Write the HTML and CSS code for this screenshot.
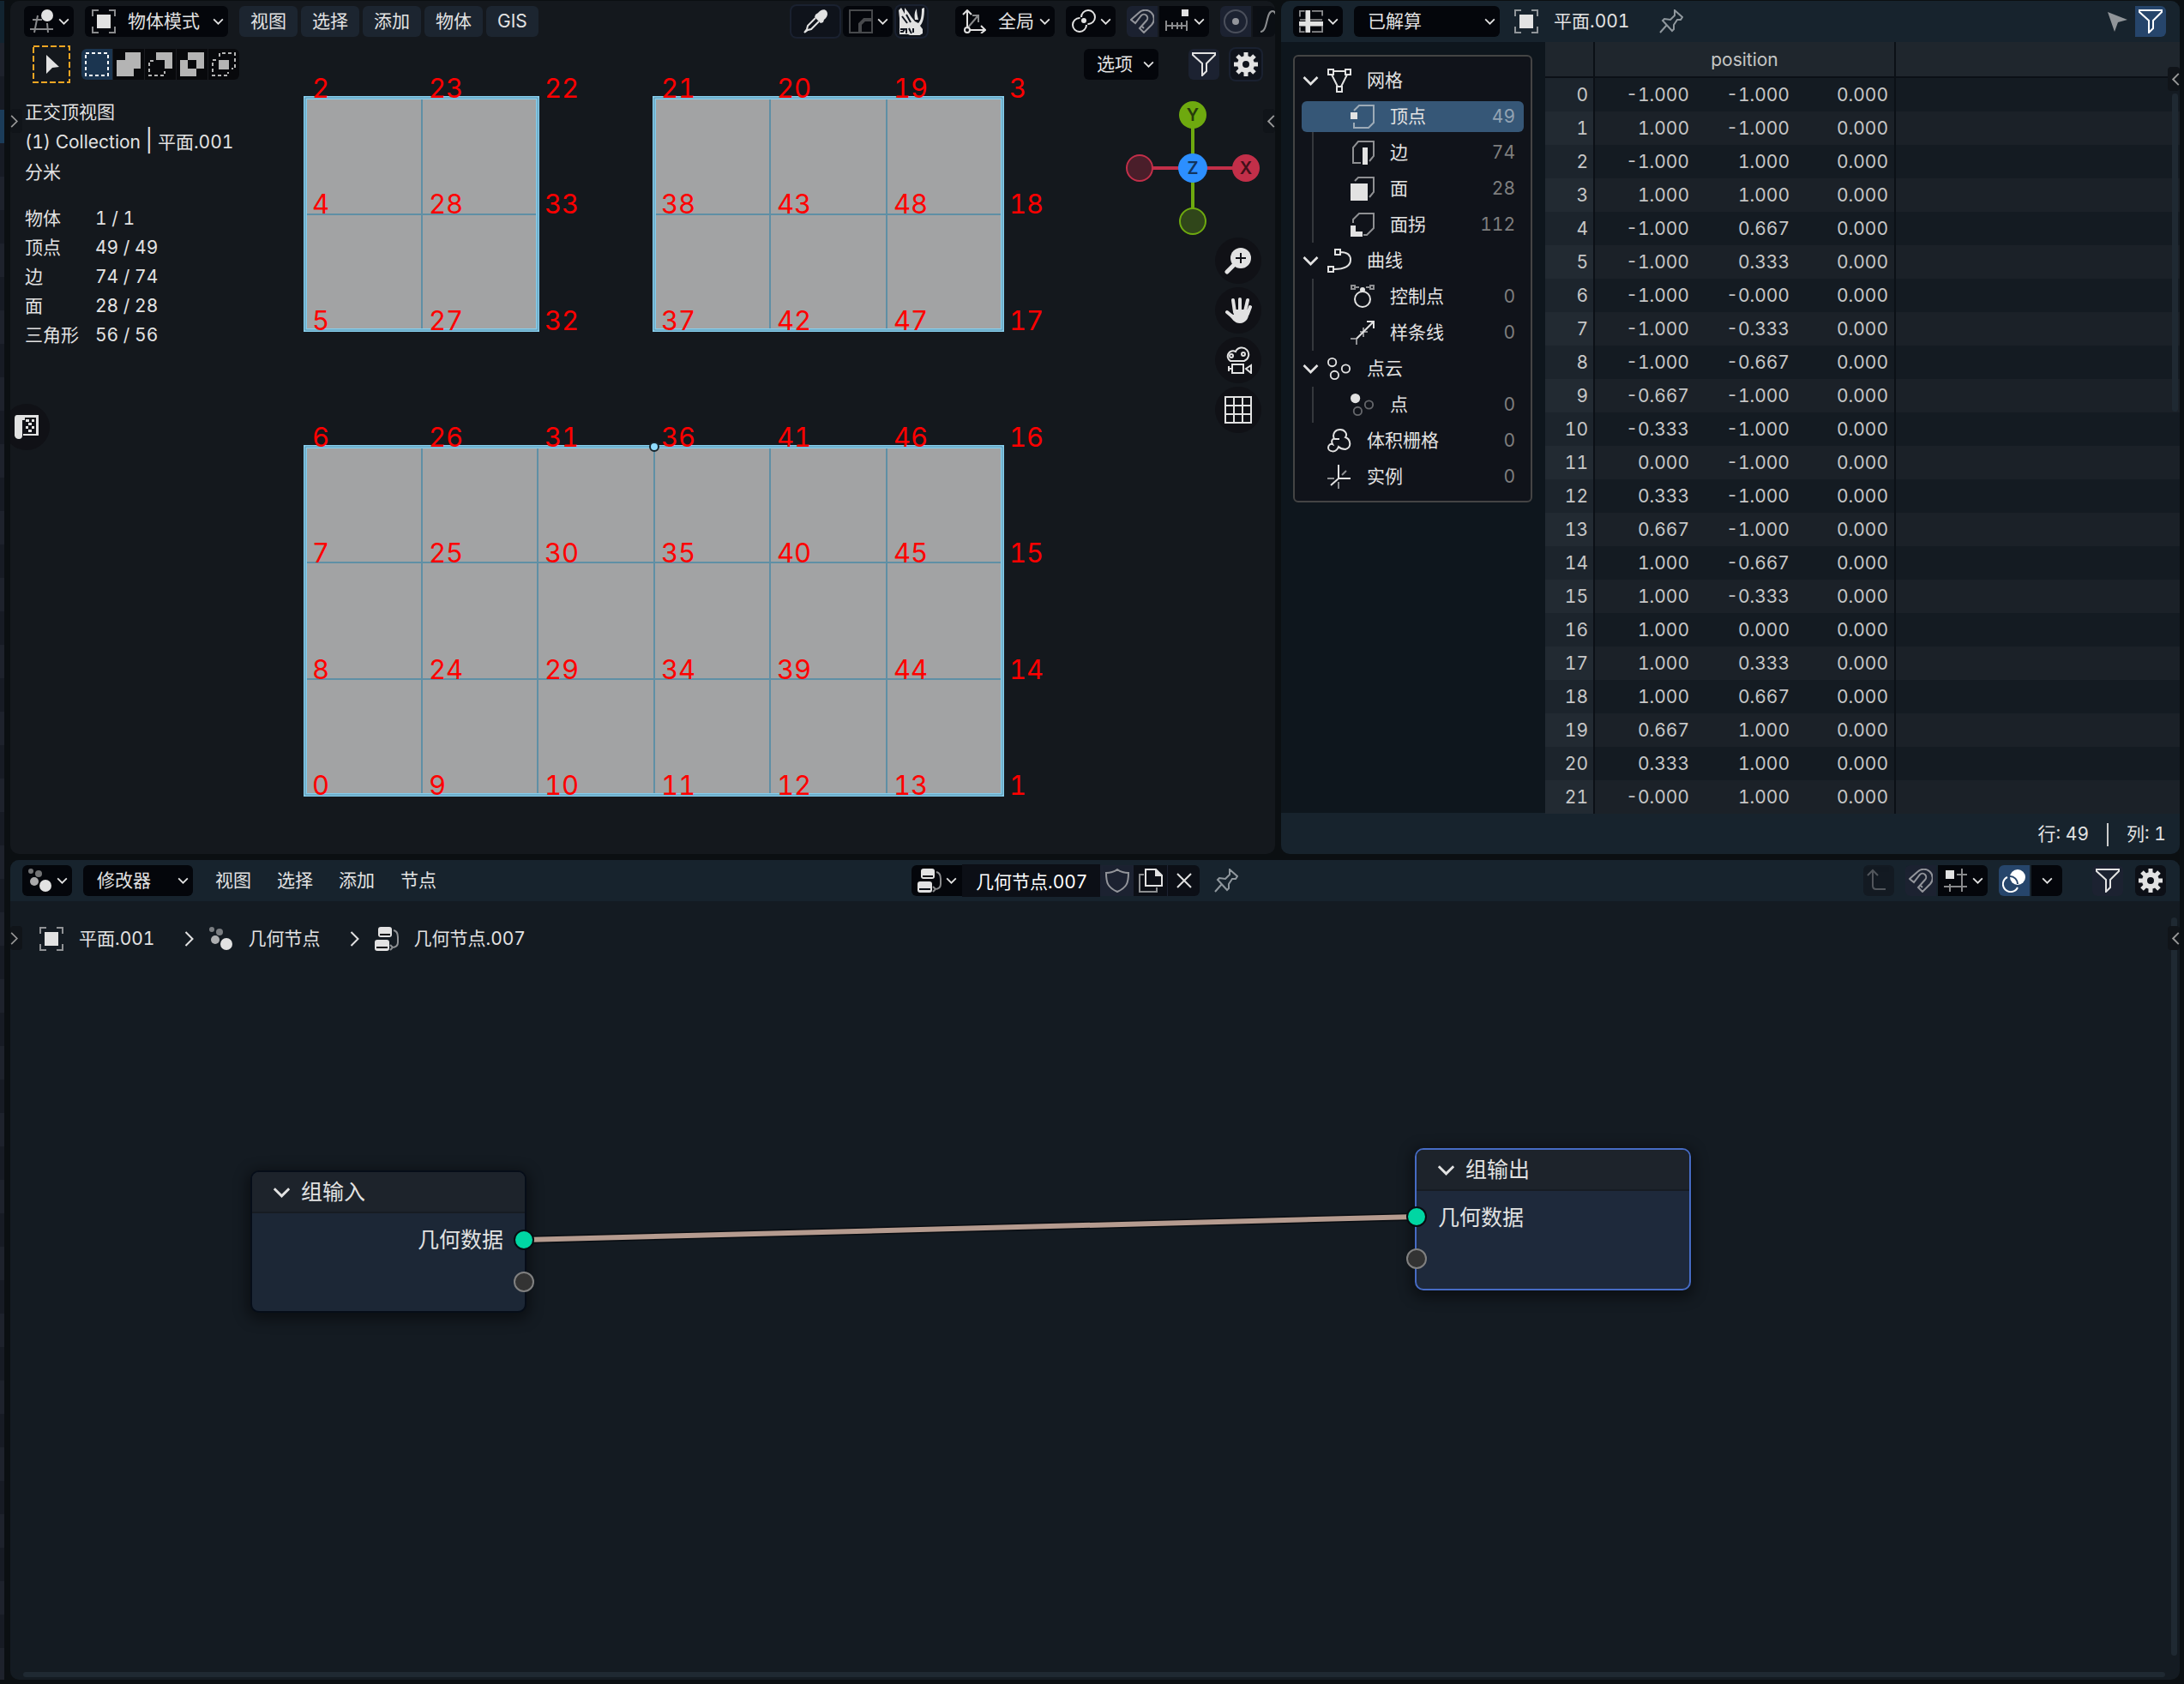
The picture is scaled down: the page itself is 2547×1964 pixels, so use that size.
FILE: index.html
```html
<!DOCTYPE html>
<html lang="zh-CN">
<head>
<meta charset="utf-8">
<title>几何节点</title>
<link rel="stylesheet" href="styles.css">
</head>
<body>
<svg class="sprite" aria-hidden="true">
  <symbol id="chev" viewBox="0 0 14 9"><path class="s" d="M1 1.500l6 6 6-6"/></symbol>
  <symbol id="right" viewBox="0 0 10 18"><path class="s" d="M1 1l8 8-8 8"/></symbol>
  <symbol id="left" viewBox="0 0 10 18"><path class="s" d="M9 2L2 9l7 7"/></symbol>
  <symbol id="object" viewBox="0 0 28 28"><path class="s dim" d="M1 8V1h7M20 1h7v7M27 20v7h-7M8 27H1v-7"/><path class="f" d="M6 6h16v16H6z"/></symbol>
  <symbol id="view3d" viewBox="0 0 28 28"><path class="s dim" d="M3 12h11M0 23h27M9 7L5 27M20 16l1 11"/><circle class="f" cx="20" cy="7" r="7"/></symbol>
  <symbol id="dropper" viewBox="0 0 28 28"><path class="f" d="M17 4c3-4 8-5 10-2s1 7-3 10l-1 3-3 1-7-7 1-3z"/><path class="s" d="M14 10L5 19l-1 4-3 4M18 14l-9 9-4 1-4 3"/></symbol>
  <symbol id="brush" viewBox="0 0 28 28"><path class="s" d="M1 1h26v26H1z"/><path d="M13 27V17l5-5h9" fill="none" stroke="currentColor" stroke-width="4"/></symbol>
  <symbol id="rhino" viewBox="0 0 30 32"><path class="f" d="M0 3l3-3 4 7V0l4 5 4 6 4 5 4 2c3-3 4-8 4-17l3-1c0 12-2 18-5 21l3 4v5l-5 3h-8l-4-2H1V12z"/><path class="f" d="M19 14c-1-6 0-10 2-13 0 5 1 9 2 13z"/><path d="M2 25h5l-2 3H2m7-4v6m3-6l3 6m2-6v5M4 10l6 8M9 8l5 9" fill="none" stroke="#10151f" stroke-width="2"/></symbol>
  <symbol id="axes" viewBox="0 0 28 28"><path class="s dim" d="M6 22L18 8M12 7h7v8"/><path class="s" d="M6 20V1M1 6l5-5 5 5M9 24h18M22 19l5 5-5 4"/><circle class="s" cx="6" cy="24" r="3"/></symbol>
  <symbol id="pivot" viewBox="0 0 28 28"><circle class="s" cx="9" cy="18" r="8" stroke-dasharray="38 12" transform="rotate(0 9 18)"/><circle class="s" cx="19" cy="9" r="8" stroke-dasharray="38 12" transform="rotate(180 19 9)"/><circle class="f" cx="14" cy="13" r="3"/></symbol>
  <symbol id="magnet" viewBox="0 0 28 28"><path class="s" d="M1 12l9-8a10 10 0 0 1 15 14l-9 9-5-5 8-9a4 4 0 0 0-6-6l-7 9zM16 22l-3-3" /></symbol>
  <symbol id="snapinc" viewBox="0 0 28 28"><path class="f" d="M19 0h8v8h-8z"/><path class="s dim" d="M0 19h26M1 13v12M8 15v8M14 15v8M19 15v8M25 13v12"/></symbol>
  <symbol id="snapgrid" viewBox="0 0 28 28"><path class="f" d="M2 2h10v10H2z"/><path class="s dim" d="M21 0v27M0 21h27M7 18v9M15 7h12"/></symbol>
  <symbol id="prop" viewBox="0 0 28 28"><circle class="s faint" cx="14" cy="14" r="13"/><circle class="f" cx="14" cy="14" r="4"/></symbol>
  <symbol id="falloff" viewBox="0 0 28 28"><path class="s" d="M1 26c9 0 6-24 14-24s5 24 12 24"/></symbol>
  <symbol id="filter" viewBox="0 0 28 28"><path class="s" d="M1 1h26v2L17 13v9l-5 5V13L1 3z"/></symbol>
  <symbol id="gear" viewBox="0 0 28 28"><circle cx="14" cy="14" r="7" fill="none" stroke="currentColor" stroke-width="6"/><path d="M14 5V0M14 23v5M5 14H0M23 14h5M8 8L4 4M20 20l4 4M8 20l-4 4M20 8l4-4" stroke="currentColor" stroke-width="5"/></symbol>
  <symbol id="sheet" viewBox="0 0 30 28"><path class="s dim" d="M1 8V1h6M16 1h13v6M29 20v7H16M7 27H1v-6M1 12h28"/><path class="f" d="M8 0h6v28H8zM0 14h30v6H0z"/></symbol>
  <symbol id="pin" viewBox="0 0 28 28"><path class="s" d="M18 1l9 8-2 3-4 0-4 6 0 5-2 2L4 13l2-2 7 1 5-5zM9 18l-8 9"/></symbol>
  <symbol id="cursor" viewBox="0 0 28 28"><path class="f" d="M2 3l23 9-11 3-4 11z"/></symbol>
  <symbol id="shield" viewBox="0 0 28 28"><path class="s" d="M14 1c4 3 8 4 13 4 0 12-2 17-13 22C3 22 1 17 1 5c5 0 9-1 13-4z"/></symbol>
  <symbol id="copy" viewBox="0 0 28 28"><path class="s dim" d="M6 7H1v20h20v-5"/><path class="s" d="M8 1h12l7 7v12H8z"/><path class="f" d="M19 0l9 9h-9z"/></symbol>
  <symbol id="close" viewBox="0 0 28 28"><path class="s" d="M6 6l16 16M22 6L6 22"/></symbol>
  <symbol id="up" viewBox="0 0 28 28"><path class="s" d="M1 8l6-6 6 6M7 2v18q0 4 4 4h11"/></symbol>
  <symbol id="overlay" viewBox="0 0 28 28"><circle class="f" cx="18" cy="10" r="9"/><path d="M9 9a9 9 0 0 1 9 9" fill="none" stroke="#26456b" stroke-width="2"/><path class="s" d="M6 10a9 9 0 1 0 12 12"/></symbol>
  <symbol id="tree" viewBox="0 0 28 28"><rect class="f" x="4" y="0" width="16" height="12" rx="3"/><rect class="f" x="0" y="15" width="17" height="13" rx="3"/><path d="M6 9h12M2 24h13" stroke="#0a0e14" stroke-width="2"/><path class="s dim" d="M22 4q5 1 5 8v6q0 6-7 6M18 21l3 3-3 3"/></symbol>
  <symbol id="geo" viewBox="0 0 28 28"><g class="f"><circle cx="3" cy="3" r="3" opacity=".5"/><circle cx="12" cy="6" r="4" opacity=".5"/><circle cx="7" cy="15" r="5" opacity=".75"/><circle cx="20" cy="20" r="7"/></g></symbol>
  <symbol id="mesh" viewBox="0 0 28 28"><path class="s" d="M1 1h6v6H1zM21 1h6v6h-6zM11 21h6v6h-6zM7 3h14M5 7l7 14M23 7l-7 14"/></symbol>
  <symbol id="vert" viewBox="0 0 28 28"><path class="s dim" d="M4 7l6-6h17v20l-6 6H4v-6"/><path class="f" d="M0 9h8v8H0z"/></symbol>
  <symbol id="edge" viewBox="0 0 28 28"><path class="s dim" d="M12 26H3V8l6-7h18v17l-5 6"/><path class="f" d="M14 8h6v20h-6z"/></symbol>
  <symbol id="face" viewBox="0 0 28 28"><path class="s dim" d="M5 5l4-4h18v17l-5 6"/><path class="f" d="M0 8h20v20H0z"/></symbol>
  <symbol id="corner" viewBox="0 0 28 28"><path class="s dim" d="M3 12V8l7-7h17v17l-8 8h-4"/><path class="f" d="M0 15h6v7h8v6H0z"/></symbol>
  <symbol id="curve" viewBox="0 0 28 28"><path class="s" d="M9 1h6v6H9zM1 21h6v6H1zM15 4c8 0 12 3 12 9 0 8-9 11-20 11"/></symbol>
  <symbol id="ctrl" viewBox="0 0 28 28"><circle class="s" cx="14" cy="17" r="9"/><path class="s dim" d="M1 1h4v4H1zM23 1h4v4h-4zM5 3h5M18 3h5"/><circle class="f" cx="14" cy="6" r="3"/></symbol>
  <symbol id="spline" viewBox="0 0 28 28"><path class="s" d="M7 21L27 1M19 1h8v8"/><path class="s dim" d="M0 21h7v7M11 13h4v6M15 8v5h5"/></symbol>
  <symbol id="cloud" viewBox="0 0 30 28"><circle class="s" cx="6" cy="6" r="5"/><circle class="s" cx="23" cy="14" r="5"/><circle class="s" cx="9" cy="22" r="5"/></symbol>
  <symbol id="point" viewBox="0 0 30 28"><circle class="f" cx="6" cy="6" r="6"/><g opacity=".4"><circle class="s" cx="23" cy="14" r="5"/><circle class="s" cx="9" cy="22" r="5"/></g></symbol>
  <symbol id="volume" viewBox="0 0 28 28"><path class="s" d="M8 12C5 5 10 1 15 1s9 5 6 9c6 2 8 12 0 14-4 0-6-1-8-3-3 8-12 6-12 1 0-3 3-5 5-4-2-4 0-7 3-6h5"/></symbol>
  <symbol id="inst" viewBox="0 0 28 28"><path class="s" d="M13 16V0M13 16h14M13 16l-9 8"/><path class="s dim" d="M0 16h8M13 20v8M17 12l5-5"/></symbol>
  <symbol id="zoom" viewBox="0 0 32 32"><circle class="f" cx="19" cy="13" r="12"/><path d="M11 21l-8 8" stroke="currentColor" stroke-width="5" stroke-linecap="round"/><path d="M19 7v12M13 13h12" stroke="#101116" stroke-width="2"/></symbol>
  <symbol id="hand" viewBox="0 0 32 32"><g fill="none" stroke="currentColor" stroke-width="4" stroke-linecap="round"><path d="M12 18L10 4M18 16V3M24 17l3-13M27 20l3-8M9 23l-6-5"/></g><path class="f" d="M10 15h18c2 9-3 16-10 16-6 0-10-5-13-11l6 1z"/></symbol>
  <symbol id="camera" viewBox="0 0 32 32"><path class="s" d="M7 17a6 6 0 1 1 6-11 8 8 0 1 1 10 11zM9 21h13v10H9zM5 23v6M5 26h4"/><circle class="s" cx="8" cy="11" r="2"/><circle class="s" cx="22" cy="9" r="2"/><path class="s" d="M31 22v9l-6-5z"/></symbol>
  <symbol id="grid" viewBox="0 0 32 32"><path class="s" d="M1 1h30v30H1zM11 1v30M21 1v30M1 11h30M1 21h30"/></symbol>
  <symbol id="asset" viewBox="0 0 28 28"><path class="f" fill-rule="evenodd" d="M3 0h25v24H10v-2h15V3H12v3H9v18q0 4-4 4t-5-4V4q0-4 3-4z"/><path class="f" d="M13 5h4v3h-4zM20 5h3v3h-3zM16 9h4v3h-4zM13 13h3v3h-3zM20 13h3v3h-3zM16 17h4v3h-4z"/></symbol>
  <symbol id="m1" viewBox="0 0 28 28"><path class="s" stroke-dasharray="4 3" d="M1 1h26v26H1z"/></symbol>
  <symbol id="m2" viewBox="0 0 28 28"><path class="f" d="M10 0h18v19h-8v9H0V9h10z"/></symbol>
  <symbol id="m3" viewBox="0 0 28 28"><path class="f" d="M9 0h19v19h-9V9H9z"/><path class="s" stroke-dasharray="4 3" d="M6 10H1v17h18v-5"/></symbol>
  <symbol id="m4" viewBox="0 0 28 28"><path class="f" fill-rule="evenodd" d="M9 0h19v19h-9v9H0V9h9zM9 9v10h10V9z"/></symbol>
  <symbol id="m5" viewBox="0 0 28 28"><path class="f" d="M8 9h12v11H8z"/><path class="s" stroke-dasharray="4 3" d="M9 5V1h18v18h-4M5 9H1v18h18v-4"/></symbol>
</svg>

<main class="app">
  <aside class="strip"></aside>

  <section class="panel viewport">
    <svg class="mesh" aria-hidden="true">
      <g class="faces"><path d="M344 113h271v271H344zM751 113h406v271H751zM344 520h813v406H344z"/></g>
      <path class="wires" d="M480 113v271M344 249h271M886 113v271M1022 113v271M751 249h406M480 520v406M615 520v406M751 520v406M886 520v406M1022 520v406M344 655h813M344 791h813"/>
      <g class="outline"><path d="M344 113h271v271H344zM751 113h406v271H751zM344 520h813v406H344z"/></g>
      <g class="inner"><path d="M344 113h271v271H344zM751 113h406v271H751zM344 520h813v406H344z"/></g>
      <g class="ids">
        <text x="352" y="113">2</text><text x="488" y="113">23</text><text x="623" y="113">22</text><text x="759" y="113">21</text><text x="894" y="113">20</text><text x="1030" y="113">19</text><text x="1165" y="113">3</text>
        <text x="352" y="248">4</text><text x="488" y="248">28</text><text x="623" y="248">33</text><text x="759" y="248">38</text><text x="894" y="248">43</text><text x="1030" y="248">48</text><text x="1165" y="248">18</text>
        <text x="352" y="384">5</text><text x="488" y="384">27</text><text x="623" y="384">32</text><text x="759" y="384">37</text><text x="894" y="384">42</text><text x="1030" y="384">47</text><text x="1165" y="384">17</text>
        <text x="352" y="520">6</text><text x="488" y="520">26</text><text x="623" y="520">31</text><text x="759" y="520">36</text><text x="894" y="520">41</text><text x="1030" y="520">46</text><text x="1165" y="520">16</text>
        <text x="352" y="655">7</text><text x="488" y="655">25</text><text x="623" y="655">30</text><text x="759" y="655">35</text><text x="894" y="655">40</text><text x="1030" y="655">45</text><text x="1165" y="655">15</text>
        <text x="352" y="791">8</text><text x="488" y="791">24</text><text x="623" y="791">29</text><text x="759" y="791">34</text><text x="894" y="791">39</text><text x="1030" y="791">44</text><text x="1165" y="791">14</text>
        <text x="352" y="926">0</text><text x="488" y="926">9</text><text x="623" y="926">10</text><text x="759" y="926">11</text><text x="894" y="926">12</text><text x="1030" y="926">13</text><text x="1165" y="926">1</text>
      </g>
      <circle class="origin" cx="751" cy="520" r="5"/>
    </svg>

    <header class="bar">
      <button class="btn black editor" aria-label="编辑器类型"><svg class="i"><use href="#view3d"/></svg><svg class="chev"><use href="#chev"/></svg></button>
      <label class="btn black dd mode"><svg class="i"><use href="#object"/></svg><select aria-label="模式"><option>物体模式</option></select><svg class="chev"><use href="#chev"/></svg></label>
      <nav class="menus filled"><button>视图</button><button>选择</button><button>添加</button><button>物体</button><button>GIS</button></nav>
      <div class="tools">
        <div class="cluster">
          <button class="btn ring wide" aria-label="吸管"><svg class="i"><use href="#dropper"/></svg></button>
          <button class="btn black editor" aria-label="笔刷"><svg class="i off"><use href="#brush"/></svg><svg class="chev"><use href="#chev"/></svg></button>
          <button class="btn ring sq" aria-label="Rhino"><svg class="rhino"><use href="#rhino"/></svg></button>
        </div>
        <label class="btn black dd orient"><svg class="i"><use href="#axes"/></svg><select aria-label="坐标系"><option>全局</option></select><svg class="chev"><use href="#chev"/></svg></label>
        <button class="btn black editor" aria-label="轴心点"><svg class="i"><use href="#pivot"/></svg><svg class="chev"><use href="#chev"/></svg></button>
        <div class="join"><button class="btn navy sq" aria-label="吸附"><svg class="i mid"><use href="#magnet"/></svg></button><button class="btn black editor" aria-label="吸附选项"><svg class="i"><use href="#snapinc"/></svg><svg class="chev"><use href="#chev"/></svg></button></div>
        <div class="join"><button class="btn navy sq" aria-label="衰减编辑"><svg class="i mid"><use href="#prop"/></svg></button><button class="btn clip" aria-label="衰减类型"><svg class="i mid"><use href="#falloff"/></svg></button></div>
      </div>
    </header>

    <div class="bar second">
      <button class="tool" aria-label="框选工具"><svg width="44" height="44" viewBox="0 0 44 44"><rect class="dash" x="1" y="1" width="42" height="42"/><path class="f" d="M16 11l15 14-8 1-7 7z"/></svg></button>
      <div class="modes"><button class="on" aria-label="设定"><svg class="i"><use href="#m1"/></svg></button><button aria-label="扩展"><svg class="i"><use href="#m2"/></svg></button><button aria-label="减去"><svg class="i"><use href="#m3"/></svg></button><button aria-label="差值"><svg class="i"><use href="#m4"/></svg></button><button aria-label="相交"><svg class="i"><use href="#m5"/></svg></button></div>
      <div class="right">
        <button class="btn black opts">选项<svg class="chev"><use href="#chev"/></svg></button>
        <button class="btn navy sq" aria-label="过滤"><svg class="i"><use href="#filter"/></svg></button>
        <button class="btn ring sq" aria-label="设置"><svg class="i"><use href="#gear"/></svg></button>
      </div>
    </div>

    <div class="info">
      <p>正交顶视图</p><p>(1) Collection <span class="rule">|</span> 平面.001</p><p>分米</p>
      <dl><dt>物体</dt><dd>1 / 1</dd><dt>顶点</dt><dd>49 / 49</dd><dt>边</dt><dd>74 / 74</dd><dt>面</dt><dd>28 / 28</dd><dt>三角形</dt><dd>56 / 56</dd></dl>
    </div>

    <button class="tab tl" aria-label="展开工具栏"><svg width="9" height="15"><use href="#right"/></svg></button>
    <button class="tab tr" aria-label="展开侧栏"><svg width="10" height="17"><use href="#left"/></svg></button>
    <button class="round assetbtn" aria-label="资产架"><svg class="i"><use href="#asset"/></svg></button>

    <div class="nav3d">
      <svg class="gizmo" width="160" height="160" viewBox="0 0 160 160">
        <path d="M18 80h124" stroke="#c22f49" stroke-width="4"/><path d="M80 18v124" stroke="#6ea90f" stroke-width="4"/>
        <circle cx="18" cy="80" r="15" fill="#4a1e2a" stroke="#c22f49" stroke-width="2"/><circle cx="142" cy="80" r="16" fill="#c22f49"/>
        <circle cx="80" cy="18" r="16" fill="#6ea90f"/><circle cx="80" cy="142" r="15" fill="#30461a" stroke="#6ea90f" stroke-width="2"/>
        <circle cx="80" cy="80" r="17" fill="#2c8fff"/>
        <text x="80" y="25" fill="#263a0c">Y</text><text x="80" y="87" fill="#12345c">Z</text><text x="142" y="87" fill="#42101a">X</text>
      </svg>
      <button class="round" aria-label="缩放"><svg class="n"><use href="#zoom"/></svg></button>
      <button class="round" aria-label="平移"><svg class="n"><use href="#hand"/></svg></button>
      <button class="round" aria-label="相机"><svg class="n"><use href="#camera"/></svg></button>
      <button class="round" aria-label="正交"><svg class="n"><use href="#grid"/></svg></button>
    </div>
  </section>

  <section class="panel sheet">
    <header class="bar head">
      <button class="btn black editor" aria-label="编辑器类型"><svg class="i"><use href="#sheet"/></svg><svg class="chev"><use href="#chev"/></svg></button>
      <label class="btn black dd state"><select aria-label="数据状态"><option>已解算</option></select><svg class="chev"><use href="#chev"/></svg></label>
      <span class="crumb first"><svg class="i"><use href="#object"/></svg>平面.001</span>
      <button class="bare pinbtn" aria-label="固定"><svg class="i"><use href="#pin"/></svg></button>
      <div class="join end"><button class="btn sq" aria-label="仅选中"><svg class="i mid"><use href="#cursor"/></svg></button><button class="btn blue sq" aria-label="过滤"><svg class="i"><use href="#filter"/></svg></button></div>
    </header>
    <div class="body">
      <div class="side">
        <ul class="domains">
          <li class="top"><svg class="tw"><use href="#chev"/></svg><svg class="i"><use href="#mesh"/></svg><span>网格</span></li>
          <li><ul>
            <li class="sel"><svg class="i"><use href="#vert"/></svg><span>顶点</span><b>49</b></li>
            <li><svg class="i"><use href="#edge"/></svg><span>边</span><b>74</b></li>
            <li><svg class="i"><use href="#face"/></svg><span>面</span><b>28</b></li>
            <li><svg class="i"><use href="#corner"/></svg><span>面拐</span><b>112</b></li>
          </ul></li>
          <li class="top"><svg class="tw"><use href="#chev"/></svg><svg class="i"><use href="#curve"/></svg><span>曲线</span></li>
          <li><ul>
            <li><svg class="i"><use href="#ctrl"/></svg><span>控制点</span><b>0</b></li>
            <li><svg class="i"><use href="#spline"/></svg><span>样条线</span><b>0</b></li>
          </ul></li>
          <li class="top"><svg class="tw"><use href="#chev"/></svg><svg class="i"><use href="#cloud"/></svg><span>点云</span></li>
          <li><ul><li><svg class="i"><use href="#point"/></svg><span>点</span><b>0</b></li></ul></li>
          <li class="top leaf"><svg class="i"><use href="#volume"/></svg><span>体积栅格</span><b>0</b></li>
          <li class="top leaf"><svg class="i"><use href="#inst"/></svg><span>实例</span><b>0</b></li>
        </ul>
      </div>
      <div class="data">
        <table>
          <colgroup><col class="c0"><col class="c1"><col class="c1"><col class="c1"><col></colgroup>
          <thead><tr><th></th><th colspan="3">position</th><th></th></tr></thead>
          <tbody>
            <tr><th>0</th><td>-1.000</td><td>-1.000</td><td>0.000</td><td></td></tr>
            <tr><th>1</th><td>1.000</td><td>-1.000</td><td>0.000</td><td></td></tr>
            <tr><th>2</th><td>-1.000</td><td>1.000</td><td>0.000</td><td></td></tr>
            <tr><th>3</th><td>1.000</td><td>1.000</td><td>0.000</td><td></td></tr>
            <tr><th>4</th><td>-1.000</td><td>0.667</td><td>0.000</td><td></td></tr>
            <tr><th>5</th><td>-1.000</td><td>0.333</td><td>0.000</td><td></td></tr>
            <tr><th>6</th><td>-1.000</td><td>-0.000</td><td>0.000</td><td></td></tr>
            <tr><th>7</th><td>-1.000</td><td>-0.333</td><td>0.000</td><td></td></tr>
            <tr><th>8</th><td>-1.000</td><td>-0.667</td><td>0.000</td><td></td></tr>
            <tr><th>9</th><td>-0.667</td><td>-1.000</td><td>0.000</td><td></td></tr>
            <tr><th>10</th><td>-0.333</td><td>-1.000</td><td>0.000</td><td></td></tr>
            <tr><th>11</th><td>0.000</td><td>-1.000</td><td>0.000</td><td></td></tr>
            <tr><th>12</th><td>0.333</td><td>-1.000</td><td>0.000</td><td></td></tr>
            <tr><th>13</th><td>0.667</td><td>-1.000</td><td>0.000</td><td></td></tr>
            <tr><th>14</th><td>1.000</td><td>-0.667</td><td>0.000</td><td></td></tr>
            <tr><th>15</th><td>1.000</td><td>-0.333</td><td>0.000</td><td></td></tr>
            <tr><th>16</th><td>1.000</td><td>0.000</td><td>0.000</td><td></td></tr>
            <tr><th>17</th><td>1.000</td><td>0.333</td><td>0.000</td><td></td></tr>
            <tr><th>18</th><td>1.000</td><td>0.667</td><td>0.000</td><td></td></tr>
            <tr><th>19</th><td>0.667</td><td>1.000</td><td>0.000</td><td></td></tr>
            <tr><th>20</th><td>0.333</td><td>1.000</td><td>0.000</td><td></td></tr>
            <tr><th>21</th><td>-0.000</td><td>1.000</td><td>0.000</td><td></td></tr>
          </tbody>
        </table>
        <i class="scroll"></i>
        <button class="tab" aria-label="展开侧栏"><svg width="10" height="17"><use href="#left"/></svg></button>
      </div>
    </div>
    <footer><span>行: 49</span><i></i><span>列: 1</span></footer>
  </section>

  <section class="panel nodes">
    <header class="bar head">
      <button class="btn black editor" aria-label="编辑器类型"><svg class="i"><use href="#geo"/></svg><svg class="chev"><use href="#chev"/></svg></button>
      <label class="btn black dd kind"><select aria-label="类型"><option>修改器</option></select><svg class="chev"><use href="#chev"/></svg></label>
      <nav class="menus"><button>视图</button><button>选择</button><button>添加</button><button>节点</button></nav>
      <div class="datablock">
        <button class="btn black" aria-label="浏览节点树"><svg class="i"><use href="#tree"/></svg><svg class="chev"><use href="#chev"/></svg></button>
        <input value="几何节点.007" aria-label="名称">
        <button class="shield" aria-label="伪用户"><svg class="i mid"><use href="#shield"/></svg></button>
        <button class="copy" aria-label="复制"><svg class="i"><use href="#copy"/></svg></button>
        <button class="unlink" aria-label="断开"><svg class="i"><use href="#close"/></svg></button>
        <button class="bare" aria-label="固定"><svg class="i"><use href="#pin"/></svg></button>
      </div>
      <div class="right">
        <button class="btn parent" aria-label="上一级"><svg class="i off"><use href="#up"/></svg></button>
        <div class="join"><button class="btn navy sq" aria-label="吸附"><svg class="i mid"><use href="#magnet"/></svg></button><button class="btn black editor" aria-label="吸附选项"><svg class="i"><use href="#snapgrid"/></svg><svg class="chev"><use href="#chev"/></svg></button></div>
        <div class="join"><button class="btn blue sq" aria-label="叠加层"><svg class="i"><use href="#overlay"/></svg></button><button class="btn black sq" aria-label="叠加层选项"><svg class="chev"><use href="#chev"/></svg></button></div>
        <div class="pair"><button class="btn navy sq" aria-label="过滤"><svg class="i"><use href="#filter"/></svg></button><button class="btn dark sq" aria-label="设置"><svg class="i"><use href="#gear"/></svg></button></div>
      </div>
    </header>
    <nav class="path">
      <span class="crumb"><svg class="i"><use href="#object"/></svg>平面.001</span><svg class="sep"><use href="#right"/></svg>
      <span class="crumb"><svg class="i"><use href="#geo"/></svg>几何节点</span><svg class="sep"><use href="#right"/></svg>
      <span class="crumb"><svg class="i"><use href="#tree"/></svg>几何节点.007</span>
    </nav>
    <article class="node in">
      <h3><svg width="21" height="13"><use href="#chev"/></svg>组输入</h3>
      <p>几何数据</p>
    </article>
    <article class="node out">
      <h3><svg width="21" height="13"><use href="#chev"/></svg>组输出</h3>
      <p>几何数据</p>
    </article>
    <svg class="links" aria-hidden="true">
      <path d="M599 443L1640 416" stroke="#080c11" stroke-width="9"/><path d="M599 443L1640 416" stroke="#b59b8f" stroke-width="6"/>
      <g fill="#00d6a3" stroke="#080c11" stroke-width="2"><circle cx="599" cy="443" r="11"/><circle cx="1640" cy="416" r="11"/></g>
      <g fill="#333" stroke="#808080" stroke-width="2"><circle cx="599" cy="492" r="11"/><circle cx="1640" cy="465" r="11"/></g>
    </svg>
    <i class="scroll v"></i><i class="scroll h"></i>
    <button class="tab tl" aria-label="展开工具栏"><svg width="9" height="15"><use href="#right"/></svg></button>
    <button class="tab tr" aria-label="展开侧栏"><svg width="10" height="17"><use href="#left"/></svg></button>
  </section>
</main>
</body>
</html>
```

FILE: styles.css
```css
* { box-sizing: border-box; }
body, p, h3, ul, dl, dd { margin: 0; padding: 0; }
ul { list-style: none; }
body {
  background: #0b0f12;
  color: #e2e2e2;
  font: 21px/34px Inter, "Noto Sans CJK SC", sans-serif;
  font-variant-numeric: tabular-nums;
}
button, select, input { font: inherit; font-variant-numeric: inherit; color: inherit; background: none; border: 0; padding: 0; margin: 0; appearance: none; outline: 0; }
svg { flex: none; display: block; }
.sprite { position: absolute; width: 0; height: 0; }
.s { fill: none; stroke: currentColor; stroke-width: 2; }
.f { fill: currentColor; }
.dim { opacity: .6; }
.faint { opacity: .4; }

.app {
  display: grid;
  grid-template-columns: 5px minmax(0, 1475fr) minmax(0, 1048fr);
  grid-template-rows: minmax(0, 995fr) minmax(0, 956fr);
  gap: 7px;
  padding: 1px 5px 5px 0;
  height: 100vh;
}
.strip {
  grid-row: 1 / 3;
  background:
    linear-gradient(#122430 49px, transparent 49px),
    linear-gradient(transparent 127px, #1b3c59 127px, #1b3c59 166px, transparent 166px),
    repeating-linear-gradient(#1e222c 0 10px, #171b24 10px 49px, #1e222c 49px 78px);
}
.panel { position: relative; border-radius: 10px; overflow: hidden; display: flex; flex-direction: column; }
.viewport { background: #14181d; }
.sheet { background: #0e161d; }
.nodes { grid-column: 2 / 4; background: #141b22; }

/* header bars */
.bar { position: relative; display: flex; align-items: center; height: 48px; padding: 0 16px; gap: 13px; flex: none; }
.head { background: #17232d; }
.i { width: 28px; height: 28px; }
.mid { opacity: .6; }
.off { opacity: .3; }
.chev { width: 13px; height: 8px; }
.btn { display: flex; align-items: center; justify-content: center; height: 36px; border-radius: 6px; flex: none; }
.black { background: #04060b; }
.navy { background: #1c2231; }
.blue { background: #26456b; color: #fff; }
.dark { background: #0c0f16; }
.ring { background: #0f131b; box-shadow: 0 0 0 2px #1a2130; }
.editor { width: 58px; padding: 0 5px 0 7px; justify-content: space-between; }
.sq { width: 36px; }
.wide { width: 56px; }
.dd { padding: 0 5px 0 8px; }
.dd select { flex: 1; min-width: 0; height: 36px; margin-left: 14px; }
.mode { width: 167px; }
.orient { width: 116px; }
.state { width: 170px; }
.kind { width: 128px; }
.state select, .kind select { margin-left: 8px; }
.menus { display: flex; gap: 4px; }
.menus button { height: 36px; padding: 0 13px; border-radius: 6px; }
.filled button { background: #1c2530; }
.tools { display: flex; gap: 13px; margin-left: auto; margin-right: -16px; }
.cluster { display: flex; gap: 4px; margin-right: 20px; }
.rhino { width: 30px; height: 32px; }
.join { display: flex; gap: 2px; }
.join > :first-child { border-radius: 6px 0 0 6px; }
.join > :last-child { border-radius: 0 6px 6px 0; }
.clip { width: 26px; justify-content: flex-start; padding-left: 8px; background: #0c0f14; overflow: hidden; }
.second { padding: 0 16px 0 26px; margin-top: 2px; }
.tool { width: 44px; height: 44px; }
.dash { fill: none; stroke: #f5a623; stroke-width: 2; stroke-dasharray: 7 3; }
.modes { display: flex; gap: 1px; border-radius: 6px; overflow: hidden; background: #1a1c20; }
.modes button { display: grid; place-items: center; width: 36px; height: 36px; background: #08090c; color: #b4b4b4; }
.modes .on { background: #1b3550; color: #fff; }
.right { display: flex; align-items: center; gap: 13px; margin-left: auto; }
.opts { width: 87px; justify-content: space-between; padding: 0 5px 0 15px; margin-right: 22px; }

/* viewport overlays */
.mesh { position: absolute; inset: 0; width: 100%; height: 100%; }
.faces { fill: #a2a3a4; }
.wires { stroke: #5f8fa5; stroke-width: 2; }
.outline { fill: none; stroke: #86cdec; stroke-width: 4; }
.inner { fill: none; stroke: #5a91aa; stroke-width: 1; }
.ids { fill: #f00; font-size: 31px; }
.origin { fill: #8fdcff; stroke: #16242c; stroke-width: 2; }
.info { position: relative; padding: 14px 17px; line-height: 35px; }
.rule { font-size: 26px; line-height: 20px; }
.info dl { display: grid; grid-template-columns: 82px auto; margin-top: 20px; line-height: 34px; }
.nav3d { position: absolute; right: 16px; top: 115px; width: 160px; display: flex; flex-direction: column; gap: 4px; }
.gizmo { margin-bottom: -3px; }
.gizmo text { font-size: 20px; font-weight: 600; text-anchor: middle; }
.round { display: grid; place-items: center; width: 54px; height: 54px; border-radius: 27px; background: #101116; }
.nav3d .round { align-self: flex-end; }
.n { width: 32px; height: 32px; }
.assetbtn { position: absolute; left: -8px; top: 470px; }
.tab { position: absolute; display: grid; place-items: center end; width: 14px; height: 28px; background: #101419; color: #999; border-radius: 4px; }
.tl { left: 0; top: 126px; justify-items: start; }
.tr { right: 0; top: 126px; }
.nodes .tl, .nodes .tr { top: 77px; }

/* spreadsheet */
.crumb { display: flex; align-items: center; gap: 18px; }
.first { margin-left: 4px; }
.bare { color: #8f979d; }
.pinbtn { margin-left: 21px; }
.end { margin-left: auto; }
.sheet .head { padding-left: 14px; }
.body { display: flex; flex: 1; min-height: 0; }
.side { width: 308px; padding: 15px 15px 0 14px; flex: none; }
.domains { border: 2px solid #444; border-radius: 6px; background: #10131a; padding: 7px 8px; }
.domains .top, .domains ul li { display: flex; align-items: center; height: 42px; padding: 0 10px 0 1px; }
.tw { width: 19px; height: 12px; margin-right: 10px; }
.domains span { margin-left: 18px; flex: 1; }
.domains .leaf { padding-left: 30px; }
.domains ul { background: linear-gradient(90deg, transparent 12px, #34373c 12px 14px, transparent 14px); }
.domains ul li { padding-left: 57px; }
.domains ul .sel { height: 36px; margin: 3px 0; border-radius: 6px; background: #365777; }
.domains b { font-weight: 400; color: #7e7e7e; }
.domains .sel b { color: #93a3b3; }
.data { position: relative; flex: 1; min-width: 0; }
table { width: 100%; table-layout: fixed; border-collapse: separate; border-spacing: 0; color: #c6c6c6; line-height: 39px; }
.c0 { width: 58px; }
.c1 { width: 117px; }
th, td { font-weight: 400; padding: 0 7px 0 0; text-align: right; height: 39px; }
thead th { height: 42px; background: #1f262d; border-bottom: 2px solid #0b1016; text-align: center; padding: 0; }
tbody th { background: #1c242c; border-right: 2px solid #0b1016; padding-right: 6px; }
thead th:not(:last-child), td:nth-child(4) { border-right: 2px solid #0b1016; }
tbody tr:nth-child(odd) { background: #141b22; }
tbody tr:nth-child(even) { background: #1b2128; }
tbody tr:nth-child(even) th { background: #222a32; }
.scroll { position: absolute; background: #1f2932; border-radius: 4px; }
.data .scroll { right: 2px; top: 60px; width: 7px; height: 371px; }
.data .tab { right: 0; top: 29px; }
footer { display: flex; align-items: center; justify-content: flex-end; gap: 21px; height: 48px; padding: 2px 16px 0; background: #17232d; flex: none; }
footer i { width: 2px; height: 27px; background: #ccc; }

/* node editor */
.nodes .head { padding-left: 14px; }
.nodes .bar .menus { margin-right: auto; }
.nodes .right { margin-left: 0; }
.datablock { position: absolute; left: 1051px; display: flex; align-items: center; height: 36px; }
.datablock button { display: grid; place-items: center; height: 36px; }
.datablock .btn { display: flex; width: 59px; gap: 5px; border-radius: 6px 0 0 6px; }
.datablock input { width: 161px; height: 38px; padding-left: 16px; background: #0c0f16; color: #fff; }
.shield { width: 39px; background: #1c2231; }
.copy { width: 39px; background: #0c0f16; }
.unlink { width: 38px; background: #0c0f16; border-left: 1px solid #1c2231; border-radius: 0 6px 6px 0; }
.datablock .bare { margin-left: 17px; }
.parent { width: 36px; background: #131a22; }
.pair { display: flex; gap: 14px; margin-left: 22px; }
.path { display: flex; align-items: center; height: 36px; margin: 26px 34px; }
.sep { width: 11px; height: 18px; margin: 0 18px 0 34px; }
.links { position: absolute; inset: 0; width: 100%; height: 100%; pointer-events: none; }
.node { position: absolute; width: 322px; height: 166px; border: 2px solid #060d18; border-radius: 10px; background: #1c2736; box-shadow: 0 4px 16px 4px rgba(0, 0, 0, .45); font-size: 25px; overflow: hidden; }
.node h3 { display: flex; align-items: center; gap: 12px; height: 48px; padding-left: 24px; font-size: 25px; font-weight: 400; background: #1d232b; border-bottom: 2px solid #171c23; }
.node p { padding: 14px 25px; }
.in { left: 280px; top: 362px; }
.in p { text-align: right; }
.out { left: 1638px; top: 336px; border-color: #466bc4; background: #1e293b; }
.scroll.v { right: 3px; top: 67px; width: 7px; bottom: 28px; }
.scroll.h { left: 15px; right: 17px; bottom: 3px; height: 6px; }
```
